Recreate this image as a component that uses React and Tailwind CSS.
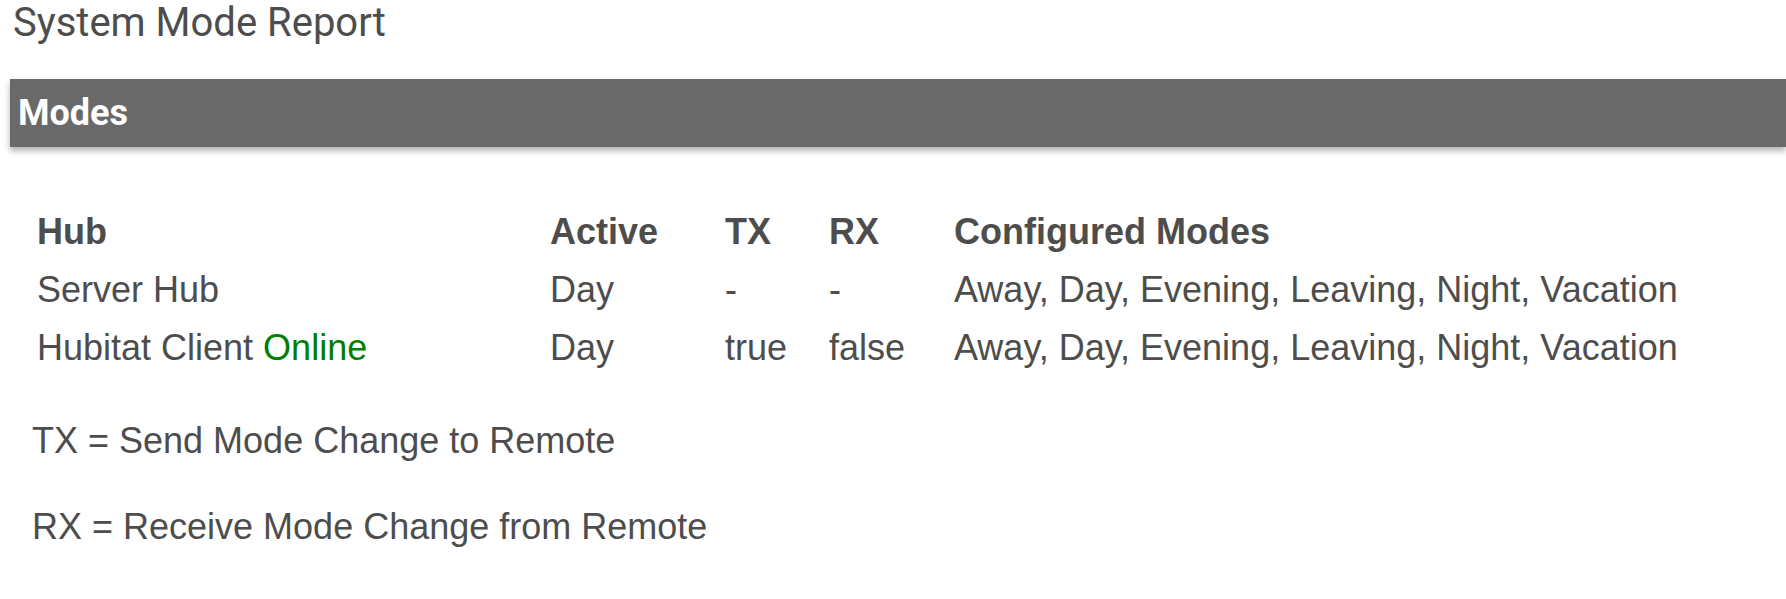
import React from 'react';

const rows = [
  { hub: 'Server Hub', online: false, active: 'Day', tx: '-', rx: '-', modes: 'Away, Day, Evening, Leaving, Night, Vacation' },
  { hub: 'Hubitat Client', online: true, active: 'Day', tx: 'true', rx: 'false', modes: 'Away, Day, Evening, Leaving, Night, Vacation' },
];

const App = () => {
  return (
    <div className="min-h-[599px] bg-white text-[#4d4d4d]">
      <h1 className="h-[46px] pl-[13px] font-['Roboto',sans-serif] text-[40px] leading-[46px] font-normal">
        System Mode Report
      </h1>

      <div className="mt-[33px] ml-[10px] h-[68px] bg-[#696969] pl-[8px] shadow-[0_4px_6px_rgba(0,0,0,0.3)]">
        <h2 className="font-['Roboto',sans-serif] text-[36px] leading-[68px] font-bold text-white">Modes</h2>
      </div>

      <div className="mt-[56px] ml-[37px] font-['Liberation_Sans',Arial,sans-serif] text-[36px] leading-[58px]">
        <div className="grid grid-cols-[513px_175px_104px_125px_auto] font-bold">
          <div>Hub</div>
          <div>Active</div>
          <div>TX</div>
          <div>RX</div>
          <div>Configured Modes</div>
        </div>
        {rows.map((r) => (
          <div key={r.hub} className="grid grid-cols-[513px_175px_104px_125px_auto]">
            <div>
              {r.hub}
              {r.online && <span className="text-[#008000]"> Online</span>}
            </div>
            <div>{r.active}</div>
            <div>{r.tx}</div>
            <div>{r.rx}</div>
            <div>{r.modes}</div>
          </div>
        ))}
      </div>

      <div className="mt-[35px] ml-[32px] flex flex-col gap-[28px] font-['Liberation_Sans',Arial,sans-serif] text-[36px] leading-[58px]">
        <p>TX = Send Mode Change to Remote</p>
        <p>RX = Receive Mode Change from Remote</p>
      </div>
    </div>
  );
};

export default App;
